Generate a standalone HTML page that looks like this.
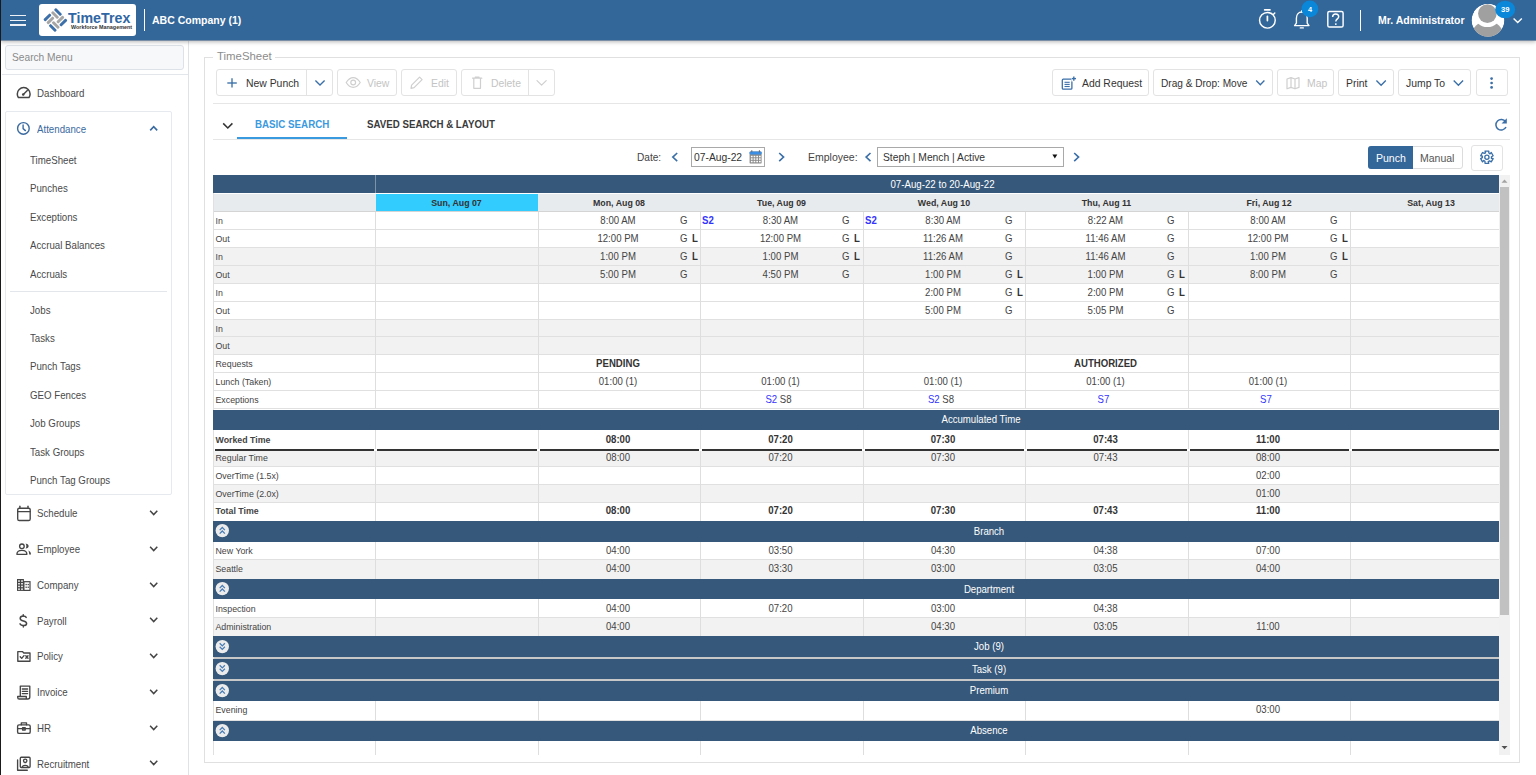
<!DOCTYPE html><html><head><meta charset="utf-8"><title>TimeSheet</title><style>
*{box-sizing:border-box;margin:0;padding:0}
html,body{width:1536px;height:775px;overflow:hidden;background:#fff;font-family:"Liberation Sans", sans-serif;color:#333}
.a{position:absolute}
.t{position:absolute;white-space:nowrap;height:16px;line-height:16px}
svg{position:absolute;overflow:visible}
</style></head><body>
<div class="a" style="left:0px;top:0px;width:1536px;height:40px;background:#336699;box-shadow:0 1px 0 #7a8ea6,0 2px 4px rgba(0,0,0,.28);z-index:5"></div>
<div class="a" style="left:0;top:0;width:1536px;height:40px;z-index:6">
<div class="a" style="left:10px;top:14.8px;width:16px;height:1.6px;background:#eef1f5"></div>
<div class="a" style="left:10px;top:19.6px;width:16px;height:1.6px;background:#eef1f5"></div>
<div class="a" style="left:10px;top:24.4px;width:16px;height:1.6px;background:#eef1f5"></div>
<div class="a" style="left:39px;top:4px;width:97px;height:32px;background:#fff;border-radius:3px"></div>
<div class="t" style="left:68px;top:10px;font-size:14.2px;color:#2f66a3;font-weight:bold;letter-spacing:0.05px">TimeTrex</div>
<div class="t" style="left:71px;top:19px;font-size:5.4px;font-weight:bold;color:#333">Workforce Management</div>
<div class="a" style="left:144px;top:9px;width:1px;height:22px;background:#fff"></div>
<div class="t" style="left:152px;top:12px;font-size:10.5px;color:#fff;font-weight:bold;">ABC Company (1)</div>
<div class="t" style="left:1378px;top:12px;font-size:10.5px;color:#fff;font-weight:bold;">Mr. Administrator</div>
<div class="a" style="left:1360px;top:10px;width:1px;height:21px;background:#fff"></div>
</div>
<div class="a" style="left:0px;top:0px;width:1px;height:775px;background:#1a1a1a;z-index:30"></div>
<div class="a" style="left:1px;top:40px;width:188px;height:735px;border-right:1px solid #dfe3e8;background:#fff"></div>
<div class="a" style="left:5px;top:45px;width:179px;height:25px;background:#f7f8fa;border:1px solid #dde2e8;border-radius:3px"></div>
<div class="t" style="left:12px;top:50px;font-size:10.2px;color:#8a8a8a;">Search Menu</div>
<div class="a" style="left:2px;top:74px;width:186px;height:1px;background:#e3e7ec"></div>
<div class="t" style="left:37px;top:85px;font-size:10.5px;color:#4a4a4a;transform:scaleX(0.924);transform-origin:0 50%;">Dashboard</div>
<div class="a" style="left:5px;top:111px;width:167px;height:384px;border:1px solid #e6e9ed;border-radius:2px"></div>
<div class="t" style="left:37px;top:121px;font-size:10.5px;color:#3a6aa0;transform:scaleX(0.924);transform-origin:0 50%;">Attendance</div>
<div class="t" style="left:30px;top:152px;font-size:10.5px;color:#4a4a4a;transform:scaleX(0.924);transform-origin:0 50%;">TimeSheet</div>
<div class="t" style="left:30px;top:180px;font-size:10.5px;color:#4a4a4a;transform:scaleX(0.924);transform-origin:0 50%;">Punches</div>
<div class="t" style="left:30px;top:209px;font-size:10.5px;color:#4a4a4a;transform:scaleX(0.924);transform-origin:0 50%;">Exceptions</div>
<div class="t" style="left:30px;top:237px;font-size:10.5px;color:#4a4a4a;transform:scaleX(0.924);transform-origin:0 50%;">Accrual Balances</div>
<div class="t" style="left:30px;top:266px;font-size:10.5px;color:#4a4a4a;transform:scaleX(0.924);transform-origin:0 50%;">Accruals</div>
<div class="t" style="left:30px;top:302px;font-size:10.5px;color:#4a4a4a;transform:scaleX(0.924);transform-origin:0 50%;">Jobs</div>
<div class="t" style="left:30px;top:330px;font-size:10.5px;color:#4a4a4a;transform:scaleX(0.924);transform-origin:0 50%;">Tasks</div>
<div class="t" style="left:30px;top:358px;font-size:10.5px;color:#4a4a4a;transform:scaleX(0.924);transform-origin:0 50%;">Punch Tags</div>
<div class="t" style="left:30px;top:387px;font-size:10.5px;color:#4a4a4a;transform:scaleX(0.924);transform-origin:0 50%;">GEO Fences</div>
<div class="t" style="left:30px;top:415px;font-size:10.5px;color:#4a4a4a;transform:scaleX(0.924);transform-origin:0 50%;">Job Groups</div>
<div class="t" style="left:30px;top:444px;font-size:10.5px;color:#4a4a4a;transform:scaleX(0.924);transform-origin:0 50%;">Task Groups</div>
<div class="t" style="left:30px;top:472px;font-size:10.5px;color:#4a4a4a;transform:scaleX(0.924);transform-origin:0 50%;">Punch Tag Groups</div>
<div class="a" style="left:10px;top:291px;width:157px;height:1px;background:#e3e7ec"></div>
<div class="t" style="left:37px;top:505px;font-size:10.5px;color:#4a4a4a;transform:scaleX(0.924);transform-origin:0 50%;">Schedule</div>
<div class="t" style="left:37px;top:541px;font-size:10.5px;color:#4a4a4a;transform:scaleX(0.924);transform-origin:0 50%;">Employee</div>
<div class="t" style="left:37px;top:577px;font-size:10.5px;color:#4a4a4a;transform:scaleX(0.924);transform-origin:0 50%;">Company</div>
<div class="t" style="left:37px;top:613px;font-size:10.5px;color:#4a4a4a;transform:scaleX(0.924);transform-origin:0 50%;">Payroll</div>
<div class="t" style="left:37px;top:648px;font-size:10.5px;color:#4a4a4a;transform:scaleX(0.924);transform-origin:0 50%;">Policy</div>
<div class="t" style="left:37px;top:684px;font-size:10.5px;color:#4a4a4a;transform:scaleX(0.924);transform-origin:0 50%;">Invoice</div>
<div class="t" style="left:37px;top:720px;font-size:10.5px;color:#4a4a4a;transform:scaleX(0.924);transform-origin:0 50%;">HR</div>
<div class="t" style="left:37px;top:756px;font-size:10.5px;color:#4a4a4a;transform:scaleX(0.924);transform-origin:0 50%;">Recruitment</div>
<div class="a" style="left:204px;top:57px;width:1316px;height:706px;border:1px solid #e0e0e0"></div>
<div class="a" style="left:213px;top:50px;width:62px;height:12px;background:#fff"></div>
<div class="t" style="left:217px;top:48px;font-size:11.4px;color:#8c8c8c;">TimeSheet</div>
<div class="a" style="left:216px;top:69px;width:117px;height:27px;border:1px solid #e3e3e3;border-radius:3px;background:#fff"></div>
<div class="a" style="left:306px;top:70px;width:1px;height:25px;background:#e3e3e3"></div>
<div class="t" style="left:246px;top:76px;font-size:10.4px;color:#333;">New Punch</div>
<div class="a" style="left:337px;top:69px;width:60px;height:27px;border:1px solid #e3e3e3;border-radius:3px;background:#fff"></div>
<div class="t" style="left:367px;top:76px;font-size:10.4px;color:#c4c4c4;">View</div>
<div class="a" style="left:401px;top:69px;width:56px;height:27px;border:1px solid #e3e3e3;border-radius:3px;background:#fff"></div>
<div class="t" style="left:431px;top:76px;font-size:10.4px;color:#c4c4c4;">Edit</div>
<div class="a" style="left:461px;top:69px;width:94px;height:27px;border:1px solid #e3e3e3;border-radius:3px;background:#fff"></div>
<div class="a" style="left:528px;top:70px;width:1px;height:25px;background:#e3e3e3"></div>
<div class="t" style="left:491px;top:76px;font-size:10.4px;color:#c4c4c4;">Delete</div>
<div class="a" style="left:1052px;top:69px;width:97px;height:27px;border:1px solid #e3e3e3;border-radius:3px;background:#fff"></div>
<div class="t" style="left:1082px;top:76px;font-size:10.4px;color:#333;">Add Request</div>
<div class="a" style="left:1153px;top:69px;width:120px;height:27px;border:1px solid #e3e3e3;border-radius:3px;background:#fff"></div>
<div class="t" style="left:1161px;top:76px;font-size:10.1px;color:#333;">Drag &amp; Drop: Move</div>
<div class="a" style="left:1277px;top:69px;width:57px;height:27px;border:1px solid #e3e3e3;border-radius:3px;background:#fff"></div>
<div class="t" style="left:1307px;top:76px;font-size:10.4px;color:#c4c4c4;">Map</div>
<div class="a" style="left:1338px;top:69px;width:56px;height:27px;border:1px solid #e3e3e3;border-radius:3px;background:#fff"></div>
<div class="t" style="left:1346px;top:76px;font-size:10.4px;color:#333;">Print</div>
<div class="a" style="left:1398px;top:69px;width:73px;height:27px;border:1px solid #e3e3e3;border-radius:3px;background:#fff"></div>
<div class="t" style="left:1406px;top:76px;font-size:10.4px;color:#333;">Jump To</div>
<div class="a" style="left:1476px;top:69px;width:32px;height:27px;border:1px solid #e3e3e3;border-radius:3px;background:#fff"></div>
<div class="a" style="left:213px;top:103px;width:1297px;height:1px;background:#e6e6e6"></div>
<div class="t" style="left:255px;top:116px;font-size:10.5px;color:#3a9ae0;transform:scaleX(0.93);transform-origin:0 50%;font-weight:bold;">BASIC SEARCH</div>
<div class="a" style="left:237px;top:137px;width:110px;height:2px;background:#3a9ae0"></div>
<div class="t" style="left:367px;top:116px;font-size:10.5px;color:#3a3a3a;transform:scaleX(0.925);transform-origin:0 50%;font-weight:bold;">SAVED SEARCH &amp; LAYOUT</div>
<div class="a" style="left:213px;top:139px;width:1297px;height:1px;background:#e6e6e6"></div>
<div class="t" style="left:637px;top:150px;font-size:10.1px;color:#444;">Date:</div>
<div class="a" style="left:691px;top:147px;width:74px;height:20px;border:1px solid #a9a9a9;background:#fff"></div>
<div class="t" style="left:694px;top:150px;font-size:10.3px;color:#333;">07-Aug-22</div>
<div class="t" style="left:808px;top:149px;font-size:10.5px;color:#444;">Employee:</div>
<div class="a" style="left:877px;top:147px;width:187px;height:20px;border:1px solid #a9a9a9;background:#fff"></div>
<div class="t" style="left:883px;top:150px;font-size:10.3px;color:#333;">Steph | Mench | Active</div>
<div class="a" style="left:1368px;top:146px;width:95px;height:23px;border:1px solid #dcdcdc;border-radius:3px;background:#fff"></div>
<div class="a" style="left:1368px;top:146px;width:45px;height:23px;background:#336699;border-radius:3px 0 0 3px"></div>
<div class="t" style="left:1376px;top:150px;font-size:10.5px;color:#fff;">Punch</div>
<div class="t" style="left:1420px;top:150px;font-size:10.5px;color:#555;">Manual</div>
<div class="a" style="left:1471px;top:145px;width:32px;height:26px;border:1px solid #e3e3e3;border-radius:3px;background:#fff"></div>
<div class="a" style="left:213px;top:0;width:1286px;height:755px;overflow:hidden">
<div class="a" style="left:0px;top:175px;width:1300px;height:18px;background:#36587a"></div>
<div class="a" style="left:162px;top:175px;width:1px;height:18px;background:#7d93aa"></div>
<div class="a" style="left:0px;top:193px;width:1300px;height:1px;background:#fff"></div>
<div class="a" style="left:0px;top:194px;width:1300px;height:17px;background:#e8ebee"></div>
<div class="a" style="left:163px;top:194px;width:162px;height:17px;background:#33ccff"></div>
<div class="a" style="left:0px;top:211px;width:1300px;height:1px;background:#d4d4d4"></div>
<div class="t" style="left:162px;top:176px;font-size:10.5px;color:#fff;transform:scaleX(0.924);transform-origin:50% 50%;width:1135px;text-align:center;">07-Aug-22 to 20-Aug-22</div>
<div class="t" style="left:162px;top:195px;font-size:8.8px;color:#333;font-weight:bold;width:163px;text-align:center;">Sun, Aug 07</div>
<div class="t" style="left:325px;top:195px;font-size:8.8px;color:#333;font-weight:bold;width:162px;text-align:center;">Mon, Aug 08</div>
<div class="t" style="left:487px;top:195px;font-size:8.8px;color:#333;font-weight:bold;width:163px;text-align:center;">Tue, Aug 09</div>
<div class="t" style="left:650px;top:195px;font-size:8.8px;color:#333;font-weight:bold;width:162px;text-align:center;">Wed, Aug 10</div>
<div class="t" style="left:812px;top:195px;font-size:8.8px;color:#333;font-weight:bold;width:163px;text-align:center;">Thu, Aug 11</div>
<div class="t" style="left:975px;top:195px;font-size:8.8px;color:#333;font-weight:bold;width:162px;text-align:center;">Fri, Aug 12</div>
<div class="t" style="left:1137px;top:195px;font-size:8.8px;color:#333;font-weight:bold;width:162px;text-align:center;">Sat, Aug 13</div>
<div class="a" style="left:0px;top:212px;width:1300px;height:17px;background:#fff"></div>
<div class="a" style="left:0px;top:229px;width:1300px;height:1px;background:#e0e0e0"></div>
<div class="a" style="left:162px;top:212px;width:1px;height:18px;background:#dedede"></div>
<div class="a" style="left:325px;top:212px;width:1px;height:18px;background:#dedede"></div>
<div class="a" style="left:487px;top:212px;width:1px;height:18px;background:#dedede"></div>
<div class="a" style="left:650px;top:212px;width:1px;height:18px;background:#dedede"></div>
<div class="a" style="left:812px;top:212px;width:1px;height:18px;background:#dedede"></div>
<div class="a" style="left:975px;top:212px;width:1px;height:18px;background:#dedede"></div>
<div class="a" style="left:1137px;top:212px;width:1px;height:18px;background:#dedede"></div>
<div class="t" style="left:2.5px;top:213px;font-size:8.8px;color:#444;">In</div>
<div class="t" style="left:324px;top:212px;font-size:10.5px;color:#444;transform:scaleX(0.915);transform-origin:50% 50%;width:162px;text-align:center;">8:00 AM</div>
<div class="t" style="left:467px;top:212px;font-size:10.5px;color:#444;transform:scaleX(0.915);transform-origin:0 50%;">G</div>
<div class="t" style="left:489px;top:212px;font-size:10.5px;color:#3333ff;transform:scaleX(0.915);transform-origin:0 50%;font-weight:bold;">S2</div>
<div class="t" style="left:486px;top:212px;font-size:10.5px;color:#444;transform:scaleX(0.915);transform-origin:50% 50%;width:163px;text-align:center;">8:30 AM</div>
<div class="t" style="left:629px;top:212px;font-size:10.5px;color:#444;transform:scaleX(0.915);transform-origin:0 50%;">G</div>
<div class="t" style="left:652px;top:212px;font-size:10.5px;color:#3333ff;transform:scaleX(0.915);transform-origin:0 50%;font-weight:bold;">S2</div>
<div class="t" style="left:649px;top:212px;font-size:10.5px;color:#444;transform:scaleX(0.915);transform-origin:50% 50%;width:162px;text-align:center;">8:30 AM</div>
<div class="t" style="left:792px;top:212px;font-size:10.5px;color:#444;transform:scaleX(0.915);transform-origin:0 50%;">G</div>
<div class="t" style="left:811px;top:212px;font-size:10.5px;color:#444;transform:scaleX(0.915);transform-origin:50% 50%;width:163px;text-align:center;">8:22 AM</div>
<div class="t" style="left:954px;top:212px;font-size:10.5px;color:#444;transform:scaleX(0.915);transform-origin:0 50%;">G</div>
<div class="t" style="left:974px;top:212px;font-size:10.5px;color:#444;transform:scaleX(0.915);transform-origin:50% 50%;width:162px;text-align:center;">8:00 AM</div>
<div class="t" style="left:1117px;top:212px;font-size:10.5px;color:#444;transform:scaleX(0.915);transform-origin:0 50%;">G</div>
<div class="a" style="left:0px;top:230px;width:1300px;height:17px;background:#fff"></div>
<div class="a" style="left:0px;top:247px;width:1300px;height:1px;background:#e0e0e0"></div>
<div class="a" style="left:162px;top:230px;width:1px;height:18px;background:#dedede"></div>
<div class="a" style="left:325px;top:230px;width:1px;height:18px;background:#dedede"></div>
<div class="a" style="left:487px;top:230px;width:1px;height:18px;background:#dedede"></div>
<div class="a" style="left:650px;top:230px;width:1px;height:18px;background:#dedede"></div>
<div class="a" style="left:812px;top:230px;width:1px;height:18px;background:#dedede"></div>
<div class="a" style="left:975px;top:230px;width:1px;height:18px;background:#dedede"></div>
<div class="a" style="left:1137px;top:230px;width:1px;height:18px;background:#dedede"></div>
<div class="t" style="left:2.5px;top:231px;font-size:8.8px;color:#444;">Out</div>
<div class="t" style="left:324px;top:230px;font-size:10.5px;color:#444;transform:scaleX(0.915);transform-origin:50% 50%;width:162px;text-align:center;">12:00 PM</div>
<div class="t" style="left:467px;top:230px;font-size:10.5px;color:#444;transform:scaleX(0.915);transform-origin:0 50%;">G</div>
<div class="t" style="left:479px;top:230px;font-size:10.5px;color:#333;transform:scaleX(0.915);transform-origin:0 50%;font-weight:bold;">L</div>
<div class="t" style="left:486px;top:230px;font-size:10.5px;color:#444;transform:scaleX(0.915);transform-origin:50% 50%;width:163px;text-align:center;">12:00 PM</div>
<div class="t" style="left:629px;top:230px;font-size:10.5px;color:#444;transform:scaleX(0.915);transform-origin:0 50%;">G</div>
<div class="t" style="left:641px;top:230px;font-size:10.5px;color:#333;transform:scaleX(0.915);transform-origin:0 50%;font-weight:bold;">L</div>
<div class="t" style="left:649px;top:230px;font-size:10.5px;color:#444;transform:scaleX(0.915);transform-origin:50% 50%;width:162px;text-align:center;">11:26 AM</div>
<div class="t" style="left:792px;top:230px;font-size:10.5px;color:#444;transform:scaleX(0.915);transform-origin:0 50%;">G</div>
<div class="t" style="left:811px;top:230px;font-size:10.5px;color:#444;transform:scaleX(0.915);transform-origin:50% 50%;width:163px;text-align:center;">11:46 AM</div>
<div class="t" style="left:954px;top:230px;font-size:10.5px;color:#444;transform:scaleX(0.915);transform-origin:0 50%;">G</div>
<div class="t" style="left:974px;top:230px;font-size:10.5px;color:#444;transform:scaleX(0.915);transform-origin:50% 50%;width:162px;text-align:center;">12:00 PM</div>
<div class="t" style="left:1117px;top:230px;font-size:10.5px;color:#444;transform:scaleX(0.915);transform-origin:0 50%;">G</div>
<div class="t" style="left:1129px;top:230px;font-size:10.5px;color:#333;transform:scaleX(0.915);transform-origin:0 50%;font-weight:bold;">L</div>
<div class="a" style="left:0px;top:248px;width:1300px;height:17px;background:#f2f2f2"></div>
<div class="a" style="left:0px;top:265px;width:1300px;height:1px;background:#e0e0e0"></div>
<div class="a" style="left:162px;top:248px;width:1px;height:18px;background:#dedede"></div>
<div class="a" style="left:325px;top:248px;width:1px;height:18px;background:#dedede"></div>
<div class="a" style="left:487px;top:248px;width:1px;height:18px;background:#dedede"></div>
<div class="a" style="left:650px;top:248px;width:1px;height:18px;background:#dedede"></div>
<div class="a" style="left:812px;top:248px;width:1px;height:18px;background:#dedede"></div>
<div class="a" style="left:975px;top:248px;width:1px;height:18px;background:#dedede"></div>
<div class="a" style="left:1137px;top:248px;width:1px;height:18px;background:#dedede"></div>
<div class="t" style="left:2.5px;top:249px;font-size:8.8px;color:#444;">In</div>
<div class="t" style="left:324px;top:248px;font-size:10.5px;color:#444;transform:scaleX(0.915);transform-origin:50% 50%;width:162px;text-align:center;">1:00 PM</div>
<div class="t" style="left:467px;top:248px;font-size:10.5px;color:#444;transform:scaleX(0.915);transform-origin:0 50%;">G</div>
<div class="t" style="left:479px;top:248px;font-size:10.5px;color:#333;transform:scaleX(0.915);transform-origin:0 50%;font-weight:bold;">L</div>
<div class="t" style="left:486px;top:248px;font-size:10.5px;color:#444;transform:scaleX(0.915);transform-origin:50% 50%;width:163px;text-align:center;">1:00 PM</div>
<div class="t" style="left:629px;top:248px;font-size:10.5px;color:#444;transform:scaleX(0.915);transform-origin:0 50%;">G</div>
<div class="t" style="left:641px;top:248px;font-size:10.5px;color:#333;transform:scaleX(0.915);transform-origin:0 50%;font-weight:bold;">L</div>
<div class="t" style="left:649px;top:248px;font-size:10.5px;color:#444;transform:scaleX(0.915);transform-origin:50% 50%;width:162px;text-align:center;">11:26 AM</div>
<div class="t" style="left:792px;top:248px;font-size:10.5px;color:#444;transform:scaleX(0.915);transform-origin:0 50%;">G</div>
<div class="t" style="left:811px;top:248px;font-size:10.5px;color:#444;transform:scaleX(0.915);transform-origin:50% 50%;width:163px;text-align:center;">11:46 AM</div>
<div class="t" style="left:954px;top:248px;font-size:10.5px;color:#444;transform:scaleX(0.915);transform-origin:0 50%;">G</div>
<div class="t" style="left:974px;top:248px;font-size:10.5px;color:#444;transform:scaleX(0.915);transform-origin:50% 50%;width:162px;text-align:center;">1:00 PM</div>
<div class="t" style="left:1117px;top:248px;font-size:10.5px;color:#444;transform:scaleX(0.915);transform-origin:0 50%;">G</div>
<div class="t" style="left:1129px;top:248px;font-size:10.5px;color:#333;transform:scaleX(0.915);transform-origin:0 50%;font-weight:bold;">L</div>
<div class="a" style="left:0px;top:266px;width:1300px;height:17px;background:#f2f2f2"></div>
<div class="a" style="left:0px;top:283px;width:1300px;height:1px;background:#e0e0e0"></div>
<div class="a" style="left:162px;top:266px;width:1px;height:18px;background:#dedede"></div>
<div class="a" style="left:325px;top:266px;width:1px;height:18px;background:#dedede"></div>
<div class="a" style="left:487px;top:266px;width:1px;height:18px;background:#dedede"></div>
<div class="a" style="left:650px;top:266px;width:1px;height:18px;background:#dedede"></div>
<div class="a" style="left:812px;top:266px;width:1px;height:18px;background:#dedede"></div>
<div class="a" style="left:975px;top:266px;width:1px;height:18px;background:#dedede"></div>
<div class="a" style="left:1137px;top:266px;width:1px;height:18px;background:#dedede"></div>
<div class="t" style="left:2.5px;top:267px;font-size:8.8px;color:#444;">Out</div>
<div class="t" style="left:324px;top:266px;font-size:10.5px;color:#444;transform:scaleX(0.915);transform-origin:50% 50%;width:162px;text-align:center;">5:00 PM</div>
<div class="t" style="left:467px;top:266px;font-size:10.5px;color:#444;transform:scaleX(0.915);transform-origin:0 50%;">G</div>
<div class="t" style="left:486px;top:266px;font-size:10.5px;color:#444;transform:scaleX(0.915);transform-origin:50% 50%;width:163px;text-align:center;">4:50 PM</div>
<div class="t" style="left:629px;top:266px;font-size:10.5px;color:#444;transform:scaleX(0.915);transform-origin:0 50%;">G</div>
<div class="t" style="left:649px;top:266px;font-size:10.5px;color:#444;transform:scaleX(0.915);transform-origin:50% 50%;width:162px;text-align:center;">1:00 PM</div>
<div class="t" style="left:792px;top:266px;font-size:10.5px;color:#444;transform:scaleX(0.915);transform-origin:0 50%;">G</div>
<div class="t" style="left:804px;top:266px;font-size:10.5px;color:#333;transform:scaleX(0.915);transform-origin:0 50%;font-weight:bold;">L</div>
<div class="t" style="left:811px;top:266px;font-size:10.5px;color:#444;transform:scaleX(0.915);transform-origin:50% 50%;width:163px;text-align:center;">1:00 PM</div>
<div class="t" style="left:954px;top:266px;font-size:10.5px;color:#444;transform:scaleX(0.915);transform-origin:0 50%;">G</div>
<div class="t" style="left:966px;top:266px;font-size:10.5px;color:#333;transform:scaleX(0.915);transform-origin:0 50%;font-weight:bold;">L</div>
<div class="t" style="left:974px;top:266px;font-size:10.5px;color:#444;transform:scaleX(0.915);transform-origin:50% 50%;width:162px;text-align:center;">8:00 PM</div>
<div class="t" style="left:1117px;top:266px;font-size:10.5px;color:#444;transform:scaleX(0.915);transform-origin:0 50%;">G</div>
<div class="a" style="left:0px;top:284px;width:1300px;height:17px;background:#fff"></div>
<div class="a" style="left:0px;top:301px;width:1300px;height:1px;background:#e0e0e0"></div>
<div class="a" style="left:162px;top:284px;width:1px;height:18px;background:#dedede"></div>
<div class="a" style="left:325px;top:284px;width:1px;height:18px;background:#dedede"></div>
<div class="a" style="left:487px;top:284px;width:1px;height:18px;background:#dedede"></div>
<div class="a" style="left:650px;top:284px;width:1px;height:18px;background:#dedede"></div>
<div class="a" style="left:812px;top:284px;width:1px;height:18px;background:#dedede"></div>
<div class="a" style="left:975px;top:284px;width:1px;height:18px;background:#dedede"></div>
<div class="a" style="left:1137px;top:284px;width:1px;height:18px;background:#dedede"></div>
<div class="t" style="left:2.5px;top:285px;font-size:8.8px;color:#444;">In</div>
<div class="t" style="left:649px;top:284px;font-size:10.5px;color:#444;transform:scaleX(0.915);transform-origin:50% 50%;width:162px;text-align:center;">2:00 PM</div>
<div class="t" style="left:792px;top:284px;font-size:10.5px;color:#444;transform:scaleX(0.915);transform-origin:0 50%;">G</div>
<div class="t" style="left:804px;top:284px;font-size:10.5px;color:#333;transform:scaleX(0.915);transform-origin:0 50%;font-weight:bold;">L</div>
<div class="t" style="left:811px;top:284px;font-size:10.5px;color:#444;transform:scaleX(0.915);transform-origin:50% 50%;width:163px;text-align:center;">2:00 PM</div>
<div class="t" style="left:954px;top:284px;font-size:10.5px;color:#444;transform:scaleX(0.915);transform-origin:0 50%;">G</div>
<div class="t" style="left:966px;top:284px;font-size:10.5px;color:#333;transform:scaleX(0.915);transform-origin:0 50%;font-weight:bold;">L</div>
<div class="a" style="left:0px;top:302px;width:1300px;height:17px;background:#fff"></div>
<div class="a" style="left:0px;top:319px;width:1300px;height:1px;background:#e0e0e0"></div>
<div class="a" style="left:162px;top:302px;width:1px;height:18px;background:#dedede"></div>
<div class="a" style="left:325px;top:302px;width:1px;height:18px;background:#dedede"></div>
<div class="a" style="left:487px;top:302px;width:1px;height:18px;background:#dedede"></div>
<div class="a" style="left:650px;top:302px;width:1px;height:18px;background:#dedede"></div>
<div class="a" style="left:812px;top:302px;width:1px;height:18px;background:#dedede"></div>
<div class="a" style="left:975px;top:302px;width:1px;height:18px;background:#dedede"></div>
<div class="a" style="left:1137px;top:302px;width:1px;height:18px;background:#dedede"></div>
<div class="t" style="left:2.5px;top:303px;font-size:8.8px;color:#444;">Out</div>
<div class="t" style="left:649px;top:302px;font-size:10.5px;color:#444;transform:scaleX(0.915);transform-origin:50% 50%;width:162px;text-align:center;">5:00 PM</div>
<div class="t" style="left:792px;top:302px;font-size:10.5px;color:#444;transform:scaleX(0.915);transform-origin:0 50%;">G</div>
<div class="t" style="left:811px;top:302px;font-size:10.5px;color:#444;transform:scaleX(0.915);transform-origin:50% 50%;width:163px;text-align:center;">5:05 PM</div>
<div class="t" style="left:954px;top:302px;font-size:10.5px;color:#444;transform:scaleX(0.915);transform-origin:0 50%;">G</div>
<div class="a" style="left:0px;top:320px;width:1300px;height:16px;background:#f2f2f2"></div>
<div class="a" style="left:0px;top:336px;width:1300px;height:1px;background:#e0e0e0"></div>
<div class="a" style="left:162px;top:320px;width:1px;height:17px;background:#dedede"></div>
<div class="a" style="left:325px;top:320px;width:1px;height:17px;background:#dedede"></div>
<div class="a" style="left:487px;top:320px;width:1px;height:17px;background:#dedede"></div>
<div class="a" style="left:650px;top:320px;width:1px;height:17px;background:#dedede"></div>
<div class="a" style="left:812px;top:320px;width:1px;height:17px;background:#dedede"></div>
<div class="a" style="left:975px;top:320px;width:1px;height:17px;background:#dedede"></div>
<div class="a" style="left:1137px;top:320px;width:1px;height:17px;background:#dedede"></div>
<div class="t" style="left:2.5px;top:321px;font-size:8.8px;color:#444;">In</div>
<div class="a" style="left:0px;top:337px;width:1300px;height:17px;background:#f2f2f2"></div>
<div class="a" style="left:0px;top:354px;width:1300px;height:1px;background:#e0e0e0"></div>
<div class="a" style="left:162px;top:337px;width:1px;height:18px;background:#dedede"></div>
<div class="a" style="left:325px;top:337px;width:1px;height:18px;background:#dedede"></div>
<div class="a" style="left:487px;top:337px;width:1px;height:18px;background:#dedede"></div>
<div class="a" style="left:650px;top:337px;width:1px;height:18px;background:#dedede"></div>
<div class="a" style="left:812px;top:337px;width:1px;height:18px;background:#dedede"></div>
<div class="a" style="left:975px;top:337px;width:1px;height:18px;background:#dedede"></div>
<div class="a" style="left:1137px;top:337px;width:1px;height:18px;background:#dedede"></div>
<div class="t" style="left:2.5px;top:338px;font-size:8.8px;color:#444;">Out</div>
<div class="a" style="left:0px;top:355px;width:1300px;height:17px;background:#fff"></div>
<div class="a" style="left:0px;top:372px;width:1300px;height:1px;background:#e0e0e0"></div>
<div class="a" style="left:162px;top:355px;width:1px;height:18px;background:#dedede"></div>
<div class="a" style="left:325px;top:355px;width:1px;height:18px;background:#dedede"></div>
<div class="a" style="left:487px;top:355px;width:1px;height:18px;background:#dedede"></div>
<div class="a" style="left:650px;top:355px;width:1px;height:18px;background:#dedede"></div>
<div class="a" style="left:812px;top:355px;width:1px;height:18px;background:#dedede"></div>
<div class="a" style="left:975px;top:355px;width:1px;height:18px;background:#dedede"></div>
<div class="a" style="left:1137px;top:355px;width:1px;height:18px;background:#dedede"></div>
<div class="t" style="left:2.5px;top:356px;font-size:8.8px;color:#444;">Requests</div>
<div class="t" style="left:324px;top:355px;font-size:10.5px;color:#333;transform:scaleX(0.915);transform-origin:50% 50%;font-weight:bold;width:162px;text-align:center;">PENDING</div>
<div class="t" style="left:811px;top:355px;font-size:10.5px;color:#333;transform:scaleX(0.915);transform-origin:50% 50%;font-weight:bold;width:163px;text-align:center;">AUTHORIZED</div>
<div class="a" style="left:0px;top:373px;width:1300px;height:17px;background:#fff"></div>
<div class="a" style="left:0px;top:390px;width:1300px;height:1px;background:#e0e0e0"></div>
<div class="a" style="left:162px;top:373px;width:1px;height:18px;background:#dedede"></div>
<div class="a" style="left:325px;top:373px;width:1px;height:18px;background:#dedede"></div>
<div class="a" style="left:487px;top:373px;width:1px;height:18px;background:#dedede"></div>
<div class="a" style="left:650px;top:373px;width:1px;height:18px;background:#dedede"></div>
<div class="a" style="left:812px;top:373px;width:1px;height:18px;background:#dedede"></div>
<div class="a" style="left:975px;top:373px;width:1px;height:18px;background:#dedede"></div>
<div class="a" style="left:1137px;top:373px;width:1px;height:18px;background:#dedede"></div>
<div class="t" style="left:2.5px;top:374px;font-size:8.8px;color:#444;">Lunch (Taken)</div>
<div class="t" style="left:324px;top:373px;font-size:10.5px;color:#444;transform:scaleX(0.915);transform-origin:50% 50%;width:162px;text-align:center;">01:00 (1)</div>
<div class="t" style="left:486px;top:373px;font-size:10.5px;color:#444;transform:scaleX(0.915);transform-origin:50% 50%;width:163px;text-align:center;">01:00 (1)</div>
<div class="t" style="left:649px;top:373px;font-size:10.5px;color:#444;transform:scaleX(0.915);transform-origin:50% 50%;width:162px;text-align:center;">01:00 (1)</div>
<div class="t" style="left:811px;top:373px;font-size:10.5px;color:#444;transform:scaleX(0.915);transform-origin:50% 50%;width:163px;text-align:center;">01:00 (1)</div>
<div class="t" style="left:974px;top:373px;font-size:10.5px;color:#444;transform:scaleX(0.915);transform-origin:50% 50%;width:162px;text-align:center;">01:00 (1)</div>
<div class="a" style="left:0px;top:391px;width:1300px;height:17px;background:#fff"></div>
<div class="a" style="left:0px;top:408px;width:1300px;height:1px;background:#e0e0e0"></div>
<div class="a" style="left:162px;top:391px;width:1px;height:18px;background:#dedede"></div>
<div class="a" style="left:325px;top:391px;width:1px;height:18px;background:#dedede"></div>
<div class="a" style="left:487px;top:391px;width:1px;height:18px;background:#dedede"></div>
<div class="a" style="left:650px;top:391px;width:1px;height:18px;background:#dedede"></div>
<div class="a" style="left:812px;top:391px;width:1px;height:18px;background:#dedede"></div>
<div class="a" style="left:975px;top:391px;width:1px;height:18px;background:#dedede"></div>
<div class="a" style="left:1137px;top:391px;width:1px;height:18px;background:#dedede"></div>
<div class="t" style="left:2.5px;top:392px;font-size:8.8px;color:#444;">Exceptions</div>
<div class="t" style="left:483.5px;top:391px;font-size:10.5px;color:#444;transform:scaleX(0.915);transform-origin:50% 50%;width:163px;text-align:center;"><span style="color:#3333ff">S2</span> S8</div>
<div class="t" style="left:646.5px;top:391px;font-size:10.5px;color:#444;transform:scaleX(0.915);transform-origin:50% 50%;width:162px;text-align:center;"><span style="color:#3333ff">S2</span> S8</div>
<div class="t" style="left:809px;top:391px;font-size:10.5px;color:#3333ff;transform:scaleX(0.915);transform-origin:50% 50%;width:163px;text-align:center;">S7</div>
<div class="t" style="left:972px;top:391px;font-size:10.5px;color:#3333ff;transform:scaleX(0.915);transform-origin:50% 50%;width:162px;text-align:center;">S7</div>
<div class="a" style="left:0px;top:410px;width:1300px;height:20px;background:#36587a"></div>
<div class="t" style="left:368px;top:411px;font-size:10.5px;color:#fff;transform:scaleX(0.915);transform-origin:50% 50%;width:800px;text-align:center;">Accumulated Time</div>
<div class="a" style="left:0px;top:430px;width:1300px;height:19px;background:#fff"></div>
<div class="a" style="left:162px;top:430px;width:1px;height:19px;background:#dedede"></div>
<div class="a" style="left:325px;top:430px;width:1px;height:19px;background:#dedede"></div>
<div class="a" style="left:487px;top:430px;width:1px;height:19px;background:#dedede"></div>
<div class="a" style="left:650px;top:430px;width:1px;height:19px;background:#dedede"></div>
<div class="a" style="left:812px;top:430px;width:1px;height:19px;background:#dedede"></div>
<div class="a" style="left:975px;top:430px;width:1px;height:19px;background:#dedede"></div>
<div class="a" style="left:1137px;top:430px;width:1px;height:19px;background:#dedede"></div>
<div class="t" style="left:2.5px;top:432px;font-size:8.8px;color:#444;font-weight:bold;">Worked Time</div>
<div class="t" style="left:324px;top:431px;font-size:10.5px;color:#333;transform:scaleX(0.915);transform-origin:50% 50%;font-weight:bold;width:162px;text-align:center;">08:00</div>
<div class="t" style="left:486px;top:431px;font-size:10.5px;color:#333;transform:scaleX(0.915);transform-origin:50% 50%;font-weight:bold;width:163px;text-align:center;">07:20</div>
<div class="t" style="left:649px;top:431px;font-size:10.5px;color:#333;transform:scaleX(0.915);transform-origin:50% 50%;font-weight:bold;width:162px;text-align:center;">07:30</div>
<div class="t" style="left:811px;top:431px;font-size:10.5px;color:#333;transform:scaleX(0.915);transform-origin:50% 50%;font-weight:bold;width:163px;text-align:center;">07:43</div>
<div class="t" style="left:974px;top:431px;font-size:10.5px;color:#333;transform:scaleX(0.915);transform-origin:50% 50%;font-weight:bold;width:162px;text-align:center;">11:00</div>
<div class="a" style="left:2px;top:449px;width:159px;height:2px;background:#333"></div>
<div class="a" style="left:164px;top:449px;width:160px;height:2px;background:#333"></div>
<div class="a" style="left:327px;top:449px;width:159px;height:2px;background:#333"></div>
<div class="a" style="left:489px;top:449px;width:160px;height:2px;background:#333"></div>
<div class="a" style="left:652px;top:449px;width:159px;height:2px;background:#333"></div>
<div class="a" style="left:814px;top:449px;width:160px;height:2px;background:#333"></div>
<div class="a" style="left:977px;top:449px;width:159px;height:2px;background:#333"></div>
<div class="a" style="left:1139px;top:449px;width:159px;height:2px;background:#333"></div>
<div class="a" style="left:0px;top:451px;width:1300px;height:15px;background:#f2f2f2"></div>
<div class="a" style="left:0px;top:466px;width:1300px;height:1px;background:#e0e0e0"></div>
<div class="a" style="left:162px;top:451px;width:1px;height:16px;background:#dedede"></div>
<div class="a" style="left:325px;top:451px;width:1px;height:16px;background:#dedede"></div>
<div class="a" style="left:487px;top:451px;width:1px;height:16px;background:#dedede"></div>
<div class="a" style="left:650px;top:451px;width:1px;height:16px;background:#dedede"></div>
<div class="a" style="left:812px;top:451px;width:1px;height:16px;background:#dedede"></div>
<div class="a" style="left:975px;top:451px;width:1px;height:16px;background:#dedede"></div>
<div class="a" style="left:1137px;top:451px;width:1px;height:16px;background:#dedede"></div>
<div class="t" style="left:2.5px;top:450px;font-size:8.8px;color:#444;">Regular Time</div>
<div class="t" style="left:324px;top:449px;font-size:10.5px;color:#444;transform:scaleX(0.915);transform-origin:50% 50%;width:162px;text-align:center;">08:00</div>
<div class="t" style="left:486px;top:449px;font-size:10.5px;color:#444;transform:scaleX(0.915);transform-origin:50% 50%;width:163px;text-align:center;">07:20</div>
<div class="t" style="left:649px;top:449px;font-size:10.5px;color:#444;transform:scaleX(0.915);transform-origin:50% 50%;width:162px;text-align:center;">07:30</div>
<div class="t" style="left:811px;top:449px;font-size:10.5px;color:#444;transform:scaleX(0.915);transform-origin:50% 50%;width:163px;text-align:center;">07:43</div>
<div class="t" style="left:974px;top:449px;font-size:10.5px;color:#444;transform:scaleX(0.915);transform-origin:50% 50%;width:162px;text-align:center;">08:00</div>
<div class="a" style="left:0px;top:467px;width:1300px;height:17px;background:#fff"></div>
<div class="a" style="left:0px;top:484px;width:1300px;height:1px;background:#e0e0e0"></div>
<div class="a" style="left:162px;top:467px;width:1px;height:18px;background:#dedede"></div>
<div class="a" style="left:325px;top:467px;width:1px;height:18px;background:#dedede"></div>
<div class="a" style="left:487px;top:467px;width:1px;height:18px;background:#dedede"></div>
<div class="a" style="left:650px;top:467px;width:1px;height:18px;background:#dedede"></div>
<div class="a" style="left:812px;top:467px;width:1px;height:18px;background:#dedede"></div>
<div class="a" style="left:975px;top:467px;width:1px;height:18px;background:#dedede"></div>
<div class="a" style="left:1137px;top:467px;width:1px;height:18px;background:#dedede"></div>
<div class="t" style="left:2.5px;top:468px;font-size:8.8px;color:#444;">OverTime (1.5x)</div>
<div class="t" style="left:974px;top:467px;font-size:10.5px;color:#444;transform:scaleX(0.915);transform-origin:50% 50%;width:162px;text-align:center;">02:00</div>
<div class="a" style="left:0px;top:485px;width:1300px;height:17px;background:#f2f2f2"></div>
<div class="a" style="left:0px;top:502px;width:1300px;height:1px;background:#e0e0e0"></div>
<div class="a" style="left:162px;top:485px;width:1px;height:18px;background:#dedede"></div>
<div class="a" style="left:325px;top:485px;width:1px;height:18px;background:#dedede"></div>
<div class="a" style="left:487px;top:485px;width:1px;height:18px;background:#dedede"></div>
<div class="a" style="left:650px;top:485px;width:1px;height:18px;background:#dedede"></div>
<div class="a" style="left:812px;top:485px;width:1px;height:18px;background:#dedede"></div>
<div class="a" style="left:975px;top:485px;width:1px;height:18px;background:#dedede"></div>
<div class="a" style="left:1137px;top:485px;width:1px;height:18px;background:#dedede"></div>
<div class="t" style="left:2.5px;top:486px;font-size:8.8px;color:#444;">OverTime (2.0x)</div>
<div class="t" style="left:974px;top:485px;font-size:10.5px;color:#444;transform:scaleX(0.915);transform-origin:50% 50%;width:162px;text-align:center;">01:00</div>
<div class="a" style="left:0px;top:503px;width:1300px;height:18px;background:#fff"></div>
<div class="a" style="left:162px;top:503px;width:1px;height:18px;background:#dedede"></div>
<div class="a" style="left:325px;top:503px;width:1px;height:18px;background:#dedede"></div>
<div class="a" style="left:487px;top:503px;width:1px;height:18px;background:#dedede"></div>
<div class="a" style="left:650px;top:503px;width:1px;height:18px;background:#dedede"></div>
<div class="a" style="left:812px;top:503px;width:1px;height:18px;background:#dedede"></div>
<div class="a" style="left:975px;top:503px;width:1px;height:18px;background:#dedede"></div>
<div class="a" style="left:1137px;top:503px;width:1px;height:18px;background:#dedede"></div>
<div class="t" style="left:2.5px;top:503px;font-size:8.8px;color:#444;font-weight:bold;">Total Time</div>
<div class="t" style="left:324px;top:502px;font-size:10.5px;color:#333;transform:scaleX(0.915);transform-origin:50% 50%;font-weight:bold;width:162px;text-align:center;">08:00</div>
<div class="t" style="left:486px;top:502px;font-size:10.5px;color:#333;transform:scaleX(0.915);transform-origin:50% 50%;font-weight:bold;width:163px;text-align:center;">07:20</div>
<div class="t" style="left:649px;top:502px;font-size:10.5px;color:#333;transform:scaleX(0.915);transform-origin:50% 50%;font-weight:bold;width:162px;text-align:center;">07:30</div>
<div class="t" style="left:811px;top:502px;font-size:10.5px;color:#333;transform:scaleX(0.915);transform-origin:50% 50%;font-weight:bold;width:163px;text-align:center;">07:43</div>
<div class="t" style="left:974px;top:502px;font-size:10.5px;color:#333;transform:scaleX(0.915);transform-origin:50% 50%;font-weight:bold;width:162px;text-align:center;">11:00</div>
<div class="a" style="left:0px;top:521px;width:1300px;height:21px;background:#36587a"></div>
<div class="t" style="left:376px;top:523px;font-size:10.5px;color:#fff;transform:scaleX(0.915);transform-origin:50% 50%;width:800px;text-align:center;">Branch</div>
<div class="a" style="left:0px;top:542px;width:1300px;height:17px;background:#fff"></div>
<div class="a" style="left:0px;top:559px;width:1300px;height:1px;background:#e0e0e0"></div>
<div class="a" style="left:162px;top:542px;width:1px;height:18px;background:#dedede"></div>
<div class="a" style="left:325px;top:542px;width:1px;height:18px;background:#dedede"></div>
<div class="a" style="left:487px;top:542px;width:1px;height:18px;background:#dedede"></div>
<div class="a" style="left:650px;top:542px;width:1px;height:18px;background:#dedede"></div>
<div class="a" style="left:812px;top:542px;width:1px;height:18px;background:#dedede"></div>
<div class="a" style="left:975px;top:542px;width:1px;height:18px;background:#dedede"></div>
<div class="a" style="left:1137px;top:542px;width:1px;height:18px;background:#dedede"></div>
<div class="t" style="left:2.5px;top:543px;font-size:8.8px;color:#444;">New York</div>
<div class="t" style="left:324px;top:542px;font-size:10.5px;color:#444;transform:scaleX(0.915);transform-origin:50% 50%;width:162px;text-align:center;">04:00</div>
<div class="t" style="left:486px;top:542px;font-size:10.5px;color:#444;transform:scaleX(0.915);transform-origin:50% 50%;width:163px;text-align:center;">03:50</div>
<div class="t" style="left:649px;top:542px;font-size:10.5px;color:#444;transform:scaleX(0.915);transform-origin:50% 50%;width:162px;text-align:center;">04:30</div>
<div class="t" style="left:811px;top:542px;font-size:10.5px;color:#444;transform:scaleX(0.915);transform-origin:50% 50%;width:163px;text-align:center;">04:38</div>
<div class="t" style="left:974px;top:542px;font-size:10.5px;color:#444;transform:scaleX(0.915);transform-origin:50% 50%;width:162px;text-align:center;">07:00</div>
<div class="a" style="left:0px;top:560px;width:1300px;height:19px;background:#f2f2f2"></div>
<div class="a" style="left:162px;top:560px;width:1px;height:19px;background:#dedede"></div>
<div class="a" style="left:325px;top:560px;width:1px;height:19px;background:#dedede"></div>
<div class="a" style="left:487px;top:560px;width:1px;height:19px;background:#dedede"></div>
<div class="a" style="left:650px;top:560px;width:1px;height:19px;background:#dedede"></div>
<div class="a" style="left:812px;top:560px;width:1px;height:19px;background:#dedede"></div>
<div class="a" style="left:975px;top:560px;width:1px;height:19px;background:#dedede"></div>
<div class="a" style="left:1137px;top:560px;width:1px;height:19px;background:#dedede"></div>
<div class="t" style="left:2.5px;top:561px;font-size:8.8px;color:#444;">Seattle</div>
<div class="t" style="left:324px;top:560px;font-size:10.5px;color:#444;transform:scaleX(0.915);transform-origin:50% 50%;width:162px;text-align:center;">04:00</div>
<div class="t" style="left:486px;top:560px;font-size:10.5px;color:#444;transform:scaleX(0.915);transform-origin:50% 50%;width:163px;text-align:center;">03:30</div>
<div class="t" style="left:649px;top:560px;font-size:10.5px;color:#444;transform:scaleX(0.915);transform-origin:50% 50%;width:162px;text-align:center;">03:00</div>
<div class="t" style="left:811px;top:560px;font-size:10.5px;color:#444;transform:scaleX(0.915);transform-origin:50% 50%;width:163px;text-align:center;">03:05</div>
<div class="t" style="left:974px;top:560px;font-size:10.5px;color:#444;transform:scaleX(0.915);transform-origin:50% 50%;width:162px;text-align:center;">04:00</div>
<div class="a" style="left:0px;top:579px;width:1300px;height:20px;background:#36587a"></div>
<div class="t" style="left:376px;top:581px;font-size:10.5px;color:#fff;transform:scaleX(0.915);transform-origin:50% 50%;width:800px;text-align:center;">Department</div>
<div class="a" style="left:0px;top:599px;width:1300px;height:18px;background:#fff"></div>
<div class="a" style="left:0px;top:617px;width:1300px;height:1px;background:#e0e0e0"></div>
<div class="a" style="left:162px;top:599px;width:1px;height:19px;background:#dedede"></div>
<div class="a" style="left:325px;top:599px;width:1px;height:19px;background:#dedede"></div>
<div class="a" style="left:487px;top:599px;width:1px;height:19px;background:#dedede"></div>
<div class="a" style="left:650px;top:599px;width:1px;height:19px;background:#dedede"></div>
<div class="a" style="left:812px;top:599px;width:1px;height:19px;background:#dedede"></div>
<div class="a" style="left:975px;top:599px;width:1px;height:19px;background:#dedede"></div>
<div class="a" style="left:1137px;top:599px;width:1px;height:19px;background:#dedede"></div>
<div class="t" style="left:2.5px;top:601px;font-size:8.8px;color:#444;">Inspection</div>
<div class="t" style="left:324px;top:600px;font-size:10.5px;color:#444;transform:scaleX(0.915);transform-origin:50% 50%;width:162px;text-align:center;">04:00</div>
<div class="t" style="left:486px;top:600px;font-size:10.5px;color:#444;transform:scaleX(0.915);transform-origin:50% 50%;width:163px;text-align:center;">07:20</div>
<div class="t" style="left:649px;top:600px;font-size:10.5px;color:#444;transform:scaleX(0.915);transform-origin:50% 50%;width:162px;text-align:center;">03:00</div>
<div class="t" style="left:811px;top:600px;font-size:10.5px;color:#444;transform:scaleX(0.915);transform-origin:50% 50%;width:163px;text-align:center;">04:38</div>
<div class="a" style="left:0px;top:618px;width:1300px;height:18px;background:#f2f2f2"></div>
<div class="a" style="left:162px;top:618px;width:1px;height:18px;background:#dedede"></div>
<div class="a" style="left:325px;top:618px;width:1px;height:18px;background:#dedede"></div>
<div class="a" style="left:487px;top:618px;width:1px;height:18px;background:#dedede"></div>
<div class="a" style="left:650px;top:618px;width:1px;height:18px;background:#dedede"></div>
<div class="a" style="left:812px;top:618px;width:1px;height:18px;background:#dedede"></div>
<div class="a" style="left:975px;top:618px;width:1px;height:18px;background:#dedede"></div>
<div class="a" style="left:1137px;top:618px;width:1px;height:18px;background:#dedede"></div>
<div class="t" style="left:2.5px;top:619px;font-size:8.8px;color:#444;">Administration</div>
<div class="t" style="left:324px;top:618px;font-size:10.5px;color:#444;transform:scaleX(0.915);transform-origin:50% 50%;width:162px;text-align:center;">04:00</div>
<div class="t" style="left:649px;top:618px;font-size:10.5px;color:#444;transform:scaleX(0.915);transform-origin:50% 50%;width:162px;text-align:center;">04:30</div>
<div class="t" style="left:811px;top:618px;font-size:10.5px;color:#444;transform:scaleX(0.915);transform-origin:50% 50%;width:163px;text-align:center;">03:05</div>
<div class="t" style="left:974px;top:618px;font-size:10.5px;color:#444;transform:scaleX(0.915);transform-origin:50% 50%;width:162px;text-align:center;">11:00</div>
<div class="a" style="left:0px;top:636px;width:1300px;height:21px;background:#36587a"></div>
<div class="t" style="left:376px;top:638px;font-size:10.5px;color:#fff;transform:scaleX(0.915);transform-origin:50% 50%;width:800px;text-align:center;">Job (9)</div>
<div class="a" style="left:0px;top:657px;width:1300px;height:2px;background:#c8c8c8"></div>
<div class="a" style="left:0px;top:659px;width:1300px;height:20px;background:#36587a"></div>
<div class="t" style="left:376px;top:661px;font-size:10.5px;color:#fff;transform:scaleX(0.915);transform-origin:50% 50%;width:800px;text-align:center;">Task (9)</div>
<div class="a" style="left:0px;top:679px;width:1300px;height:2px;background:#c8c8c8"></div>
<div class="a" style="left:0px;top:681px;width:1300px;height:20px;background:#36587a"></div>
<div class="t" style="left:376px;top:682px;font-size:10.5px;color:#fff;transform:scaleX(0.915);transform-origin:50% 50%;width:800px;text-align:center;">Premium</div>
<div class="a" style="left:0px;top:701px;width:1300px;height:19px;background:#fff"></div>
<div class="a" style="left:0px;top:720px;width:1300px;height:1px;background:#e0e0e0"></div>
<div class="a" style="left:162px;top:701px;width:1px;height:20px;background:#dedede"></div>
<div class="a" style="left:325px;top:701px;width:1px;height:20px;background:#dedede"></div>
<div class="a" style="left:487px;top:701px;width:1px;height:20px;background:#dedede"></div>
<div class="a" style="left:650px;top:701px;width:1px;height:20px;background:#dedede"></div>
<div class="a" style="left:812px;top:701px;width:1px;height:20px;background:#dedede"></div>
<div class="a" style="left:975px;top:701px;width:1px;height:20px;background:#dedede"></div>
<div class="a" style="left:1137px;top:701px;width:1px;height:20px;background:#dedede"></div>
<div class="t" style="left:2.5px;top:702px;font-size:8.8px;color:#444;">Evening</div>
<div class="t" style="left:974px;top:701px;font-size:10.5px;color:#444;transform:scaleX(0.915);transform-origin:50% 50%;width:162px;text-align:center;">03:00</div>
<div class="a" style="left:0px;top:721px;width:1300px;height:20px;background:#36587a"></div>
<div class="t" style="left:376px;top:722px;font-size:10.5px;color:#fff;transform:scaleX(0.915);transform-origin:50% 50%;width:800px;text-align:center;">Absence</div>
<div class="a" style="left:162px;top:741px;width:1px;height:14px;background:#dedede"></div>
<div class="a" style="left:325px;top:741px;width:1px;height:14px;background:#dedede"></div>
<div class="a" style="left:487px;top:741px;width:1px;height:14px;background:#dedede"></div>
<div class="a" style="left:650px;top:741px;width:1px;height:14px;background:#dedede"></div>
<div class="a" style="left:812px;top:741px;width:1px;height:14px;background:#dedede"></div>
<div class="a" style="left:975px;top:741px;width:1px;height:14px;background:#dedede"></div>
<div class="a" style="left:1137px;top:741px;width:1px;height:14px;background:#dedede"></div>
<div class="a" style="left:0px;top:175px;width:1px;height:580px;background:#e0e0e0"></div>
<div class="a" style="left:0px;top:175px;width:1px;height:18px;background:#36587a"></div>
<div class="a" style="left:0px;top:410px;width:1px;height:20px;background:#36587a"></div>
<div class="a" style="left:0px;top:521px;width:1px;height:21px;background:#36587a"></div>
<div class="a" style="left:0px;top:579px;width:1px;height:20px;background:#36587a"></div>
<div class="a" style="left:0px;top:636px;width:1px;height:21px;background:#36587a"></div>
<div class="a" style="left:0px;top:659px;width:1px;height:20px;background:#36587a"></div>
<div class="a" style="left:0px;top:681px;width:1px;height:20px;background:#36587a"></div>
<div class="a" style="left:0px;top:721px;width:1px;height:20px;background:#36587a"></div>
</div>
<div class="a" style="left:1499px;top:175px;width:11px;height:580px;background:#f1f1f1"></div>
<div class="a" style="left:1500px;top:187px;width:9px;height:428px;background:#c1c1c1"></div>
<svg style="left:0;top:0;z-index:20;pointer-events:none" width="1536" height="775"><g fill="none" stroke="#fff" stroke-width="1.45" stroke-linecap="round"><circle cx="1267.4" cy="20.3" r="7.85"/><line x1="1264.6" y1="9.9" x2="1270" y2="9.9" stroke-width="1.6"/><line x1="1267.4" y1="16.4" x2="1267.4" y2="20.6" stroke-width="1.7"/><line x1="1273.6" y1="14.2" x2="1274.8" y2="13" /></g><g fill="none" stroke="#fff" stroke-width="1.4" stroke-linejoin="round" stroke-linecap="round"><path d="M1294.6,25.6 H1309 L1307.2,23.2 V18.2 C1307.2,14.4 1304.8,12 1301.8,12 C1298.8,12 1296.4,14.4 1296.4,18.2 V23.2 Z"/><line x1="1300.3" y1="27.9" x2="1303.3" y2="27.9"/><line x1="1301.8" y1="10.6" x2="1301.8" y2="12"/></g><circle cx="1309.9" cy="8.9" r="8.4" fill="#0a87d8"/><text x="1310.1" y="11.6" font-family="Liberation Sans" font-size="7.4" font-weight="bold" fill="#fff" text-anchor="middle">4</text><rect x="1327.8" y="11.4" width="15.3" height="15.6" rx="1.6" fill="none" stroke="#fff" stroke-width="1.45"/><path d="M1332.6,17.1 C1332.6,14.9 1334,13.9 1335.7,13.9 C1337.5,13.9 1338.7,15.1 1338.7,16.7 C1338.7,18.8 1335.8,19.1 1335.8,21.6" fill="none" stroke="#fff" stroke-width="1.45"/><circle cx="1335.8" cy="24.1" r="0.95" fill="#fff"/><defs><clipPath id="av"><circle cx="1488" cy="20.3" r="16.4"/></clipPath></defs><g clip-path="url(#av)"><circle cx="1488" cy="20.3" r="16.4" fill="#fff"/><circle cx="1487.5" cy="37" r="16.2" fill="#a0a0a0"/><circle cx="1487.4" cy="13.6" r="13.5" fill="#fff"/><circle cx="1487.4" cy="13.6" r="9.3" fill="#a0a0a0"/></g><ellipse cx="1505.2" cy="9.5" rx="10" ry="8.8" fill="#0a87d8"/><text x="1505.2" y="12.2" font-family="Liberation Sans" font-size="7.6" font-weight="bold" fill="#fff" text-anchor="middle">39</text><polyline points="1513.6,18.4 1517.7,22.5 1521.8,18.4" fill="none" stroke="#fff" stroke-width="1.4"/><g transform="translate(55.4,20) rotate(45)"><rect x="-8.3" y="-8.9" width="9" height="2.9" rx="1" fill="#3d6fa8"/><rect x="-8.3" y="-4.7" width="9" height="2.9" rx="1" fill="#a6a6a6"/><rect x="-8.9" y="-0.7" width="2.9" height="9" rx="1" fill="#3d6fa8"/><rect x="-4.7" y="-0.7" width="2.9" height="9" rx="1" fill="#a6a6a6"/><rect x="-0.7" y="6" width="9" height="2.9" rx="1" fill="#3d6fa8"/><rect x="-0.7" y="1.8" width="9" height="2.9" rx="1" fill="#a6a6a6"/><rect x="6" y="-8.3" width="2.9" height="9" rx="1" fill="#3d6fa8"/><rect x="1.8" y="-8.3" width="2.9" height="9" rx="1" fill="#a6a6a6"/></g><g fill="none" stroke="#454545" stroke-width="1.35" stroke-linecap="round" stroke-linejoin="round"><path stroke-width="1.5" d="M18.4,97.5 C17.6,96.4 17.3,95.2 17.3,94 A6.4,6.4 0 0 1 30.1,94 C30.1,95.2 29.8,96.4 29,97.5 Z"/></g><line x1="23.3" y1="94.5" x2="27.3" y2="90.4" stroke="#454545" stroke-width="1.4" stroke-linecap="round"/><circle cx="23.2" cy="94.6" r="1.25" fill="#454545"/><g fill="none" stroke="#3a6aa0" stroke-width="1.4" stroke-linecap="round" stroke-linejoin="round"><circle cx="23.4" cy="128.4" r="5.8"/><path d="M23.1,125 V128.6 L25.4,130.6"/></g><polyline points="150.2,130.4 153.7,126.7 157.2,130.4" fill="none" stroke="#3a6aa0" stroke-width="1.6"/><g fill="none" stroke="#454545" stroke-width="1.35" stroke-linecap="round" stroke-linejoin="round"><rect x="17.7" y="508.2" width="12.5" height="12.3" rx="1.6"/><line x1="17.7" y1="511.6" x2="30.2" y2="511.6"/><line x1="19.9" y1="506.2" x2="19.9" y2="508"/><line x1="28" y1="506.2" x2="28" y2="508"/><circle cx="21.9" cy="546.3" r="2.3"/><path d="M16.9,554.3 C16.9,551.3 19.3,550.3 21.9,550.3 C24.5,550.3 26.9,551.3 26.9,554.3 Z"/></g><path d="M25.6,543.6 C27.9,543.9 28.6,545.2 28.6,546.2 C28.6,547.3 27.6,548.4 25.6,548.6 C26.6,547.5 26.7,544.8 25.6,543.6 Z" fill="#454545"/><path d="M28.2,550.4 C30.2,551 31,552.6 31,554.6 H29.2 C29.2,552.8 28.9,551.4 28.2,550.4 Z" fill="#454545"/><g fill="none" stroke="#454545" stroke-width="1.35" stroke-linecap="round" stroke-linejoin="round"></g><rect x="17" y="579" width="6.9" height="11.9" fill="#454545"/><g fill="#fff"><rect x="18.2" y="580.3" width="1.6" height="1.5"/><rect x="18.2" y="583.0" width="1.6" height="1.5"/><rect x="18.2" y="585.7" width="1.6" height="1.5"/><rect x="18.2" y="588.4" width="1.6" height="1.5"/><rect x="21.2" y="580.3" width="1.6" height="1.5"/><rect x="21.2" y="583.0" width="1.6" height="1.5"/><rect x="21.2" y="585.7" width="1.6" height="1.5"/><rect x="21.2" y="588.4" width="1.6" height="1.5"/></g><rect x="23.9" y="581.7" width="6.1" height="8.7" fill="none" stroke="#454545" stroke-width="1.2"/><g fill="#454545"><rect x="25.5" y="583.9" width="1.3" height="1.3"/><rect x="27.6" y="583.9" width="1.3" height="1.3"/><rect x="25.5" y="586.6" width="1.3" height="1.3"/><rect x="27.6" y="586.6" width="1.3" height="1.3"/></g><g fill="none" stroke="#454545" stroke-width="1.35" stroke-linecap="round" stroke-linejoin="round"><path stroke-width="1.5" d="M26.2,617.4 C25.7,616.4 24.7,616 23.3,616 C21.4,616 20.2,617 20.2,618.4 C20.2,621.8 26.6,620.2 26.6,623.4 C26.6,624.9 25.2,625.6 23.3,625.6 C21.8,625.6 20.6,625 20,623.9"/><line x1="23.3" y1="614.6" x2="23.3" y2="616"/><line x1="23.3" y1="625.6" x2="23.3" y2="627"/><path d="M17.8,661.2 V651.6 H22.4 L23.8,653 H30 V661.2 Z"/><path d="M20.2,656.8 L21.7,658.4 L24,655.6"/><path d="M25.8,655.7 L28,658.2 M28,655.7 L25.8,658.2"/><path d="M20.3,696.5 V686.1 H29.8 V697 C29.8,698.3 29,699 27.8,699 H19.3 C18.2,699 17.7,698.3 17.7,697.4 V696.5 H26.3 V698.2"/><line x1="22.3" y1="689" x2="27.6" y2="689"/><line x1="22.3" y1="691.3" x2="27.6" y2="691.3"/><line x1="22.3" y1="693.6" x2="27.6" y2="693.6"/><rect x="17.6" y="724.8" width="12.6" height="8.6" rx="1.5"/><path d="M21.3,724.8 V722.8 H26.5 V724.8"/><line x1="17.6" y1="728.6" x2="30.2" y2="728.6"/><rect x="22.6" y="727.6" width="2.6" height="2.4"/><rect x="20.3" y="757.2" width="9.8" height="10.3" rx="1"/><path d="M17.6,760 V770.2 H27.3"/><circle cx="25.2" cy="760.8" r="1.7"/><path d="M22.3,767.4 C22.3,764.6 28.1,764.6 28.1,767.4"/></g><polyline points="150.1,510.8 153.7,514.6 157.3,510.8" fill="none" stroke="#454545" stroke-width="1.5"/><polyline points="150.1,546.8 153.7,550.6 157.3,546.8" fill="none" stroke="#454545" stroke-width="1.5"/><polyline points="150.1,582.8 153.7,586.6 157.3,582.8" fill="none" stroke="#454545" stroke-width="1.5"/><polyline points="150.1,617.8 153.7,621.6 157.3,617.8" fill="none" stroke="#454545" stroke-width="1.5"/><polyline points="150.1,653.8 153.7,657.6 157.3,653.8" fill="none" stroke="#454545" stroke-width="1.5"/><polyline points="150.1,689.8 153.7,693.6 157.3,689.8" fill="none" stroke="#454545" stroke-width="1.5"/><polyline points="150.1,725.8 153.7,729.6 157.3,725.8" fill="none" stroke="#454545" stroke-width="1.5"/><polyline points="150.1,760.8 153.7,764.6 157.3,760.8" fill="none" stroke="#454545" stroke-width="1.5"/><g fill="none" stroke="#3a6fa8" stroke-width="1.35"><line x1="227.3" y1="83" x2="236.8" y2="83"/><line x1="232" y1="78.3" x2="232" y2="87.6"/><polyline points="315.4,80.4 320,85 324.6,80.4"/><polyline points="1256.2,80.6 1260.3,84.7 1264.4,80.6"/><polyline points="1376.4,80.6 1381.1,85.3 1385.8,80.6"/><polyline points="1453.7,80.6 1458.4,85.3 1463.1,80.6"/></g><g fill="#3a6fa8"><circle cx="1491.6" cy="78.6" r="1.35"/><circle cx="1491.6" cy="83" r="1.35"/><circle cx="1491.6" cy="87.4" r="1.35"/></g><g fill="none" stroke="#cfcfcf" stroke-width="1.2" stroke-linejoin="round" stroke-linecap="round"><path d="M346.2,82.5 C348.5,78.8 350.8,77.6 353.2,77.6 C355.6,77.6 357.9,78.8 360.2,82.5 C357.9,86.2 355.6,87.4 353.2,87.4 C350.8,87.4 348.5,86.2 346.2,82.5 Z"/><circle cx="353.2" cy="82.5" r="2.4"/><path d="M411,88.3 L411.6,85.2 L419.6,77.2 L422.1,79.7 L414.1,87.7 Z"/><path d="M472.5,78.2 H481.8 M475.3,78.2 V77 H479 V78.2 M473.8,78.2 V88.3 H480.5 V78.2"/><polyline points="537,80.6 541.6,85.2 546.2,80.6"/><path d="M1287,79 L1291,77.6 L1295,79 L1299,77.6 V87.4 L1295,88.8 L1291,87.4 L1287,88.8 Z M1291,77.6 V87.4 M1295,79 V88.8"/></g><g fill="none" stroke="#3a6fa8" stroke-width="1.3"><rect x="1062.3" y="79.2" width="9.6" height="10" rx="1"/></g><g stroke="#3a6fa8" stroke-width="1.1"><line x1="1064.5" y1="82.3" x2="1069.7" y2="82.3"/><line x1="1064.5" y1="84.4" x2="1069.7" y2="84.4"/><line x1="1064.5" y1="86.5" x2="1069.7" y2="86.5"/></g><g stroke="#fff" stroke-width="3.4"><line x1="1073" y1="76" x2="1073" y2="81.5"/></g><g stroke="#3a6fa8" stroke-width="1.4"><line x1="1071.7" y1="78.6" x2="1076" y2="78.6"/><line x1="1073.8" y1="76.4" x2="1073.8" y2="80.8"/></g><polyline points="223.2,123.4 227.8,128 232.4,123.4" fill="none" stroke="#333" stroke-width="1.55"/><path d="M1505.6,121.8 A5.3,5.3 0 1 0 1506,127" fill="none" stroke="#3a6fa8" stroke-width="1.5"/><path d="M1506.8,118.2 V123.4 H1501.6 Z" fill="#3a6fa8"/><g fill="none" stroke="#3a6fa8" stroke-width="1.6"><polyline points="677.2,153 672.8,157.1 677.2,161.2"/><polyline points="779.2,153 783.6,157.1 779.2,161.2"/><polyline points="870.5,153 866.1,157.1 870.5,161.2"/><polyline points="1074.2,153 1078.6,157.1 1074.2,161.2"/></g><rect x="749.6" y="151.4" width="12" height="12.2" rx="1.2" fill="#8c8c8c"/><rect x="749.6" y="151.4" width="12" height="3.2" rx="1" fill="#3a8ee6"/><g fill="#fff"><rect x="750.9" y="155.8" width="1.7" height="1.5"/><rect x="750.9" y="158.3" width="1.7" height="1.5"/><rect x="750.9" y="160.8" width="1.7" height="1.5"/><rect x="753.6" y="155.8" width="1.7" height="1.5"/><rect x="753.6" y="158.3" width="1.7" height="1.5"/><rect x="753.6" y="160.8" width="1.7" height="1.5"/><rect x="756.3" y="155.8" width="1.7" height="1.5"/><rect x="756.3" y="158.3" width="1.7" height="1.5"/><rect x="756.3" y="160.8" width="1.7" height="1.5"/><rect x="759.0" y="155.8" width="1.7" height="1.5"/><rect x="759.0" y="158.3" width="1.7" height="1.5"/><rect x="759.0" y="160.8" width="1.7" height="1.5"/></g><path d="M751.8,150.2 V152.4 M759.4,150.2 V152.4" stroke="#666" stroke-width="1"/><path d="M1052.4,154.4 H1057.3 L1054.85,158.6 Z" fill="#111"/><g transform="translate(1486.9,157.2)" fill="none" stroke="#3a6fa8" stroke-width="1.35" stroke-linejoin="round"><polygon points="-1.87,-6.12 1.87,-6.12 1.94,-4.17 3.14,-3.36 4.36,-4.68 6.24,-1.44 4.58,-0.40 4.48,1.03 6.24,1.44 4.36,4.68 2.64,3.77 1.34,4.40 1.87,6.12 -1.87,6.12 -1.94,4.17 -3.14,3.36 -4.36,4.68 -6.24,1.44 -4.58,0.40 -4.48,-1.03 -6.24,-1.44 -4.36,-4.68 -2.64,-3.77 -1.34,-4.40"/><circle r="2.1"/></g><path d="M1501.5,182.8 H1507.5 L1504.5,179.6 Z" fill="#a3a3a3"/><path d="M1501.5,746 H1507.5 L1504.5,749.2 Z" fill="#505050"/><circle cx="222.3" cy="530.6" r="6.7" fill="#ececec"/><polyline points="219.7,530.1 222.3,527.5 224.9,530.1" fill="none" stroke="#4a7db5" stroke-width="1.3"/><polyline points="219.7,533.6 222.3,531.0 224.9,533.6" fill="none" stroke="#4a7db5" stroke-width="1.3"/><circle cx="222.3" cy="588.6" r="6.7" fill="#ececec"/><polyline points="219.7,588.1 222.3,585.5 224.9,588.1" fill="none" stroke="#4a7db5" stroke-width="1.3"/><polyline points="219.7,591.6 222.3,589.0 224.9,591.6" fill="none" stroke="#4a7db5" stroke-width="1.3"/><circle cx="222.3" cy="646.6" r="6.7" fill="#ececec"/><polyline points="219.7,643.3 222.3,645.9 224.9,643.3" fill="none" stroke="#4a7db5" stroke-width="1.3"/><polyline points="219.7,646.8 222.3,649.4 224.9,646.8" fill="none" stroke="#4a7db5" stroke-width="1.3"/><circle cx="222.3" cy="668.6" r="6.7" fill="#ececec"/><polyline points="219.7,665.3 222.3,667.9 224.9,665.3" fill="none" stroke="#4a7db5" stroke-width="1.3"/><polyline points="219.7,668.8 222.3,671.4 224.9,668.8" fill="none" stroke="#4a7db5" stroke-width="1.3"/><circle cx="222.3" cy="690.6" r="6.7" fill="#ececec"/><polyline points="219.7,690.1 222.3,687.5 224.9,690.1" fill="none" stroke="#4a7db5" stroke-width="1.3"/><polyline points="219.7,693.6 222.3,691.0 224.9,693.6" fill="none" stroke="#4a7db5" stroke-width="1.3"/><circle cx="222.3" cy="730.6" r="6.7" fill="#ececec"/><polyline points="219.7,730.1 222.3,727.5 224.9,730.1" fill="none" stroke="#4a7db5" stroke-width="1.3"/><polyline points="219.7,733.6 222.3,731.0 224.9,733.6" fill="none" stroke="#4a7db5" stroke-width="1.3"/></svg>
</body></html>
